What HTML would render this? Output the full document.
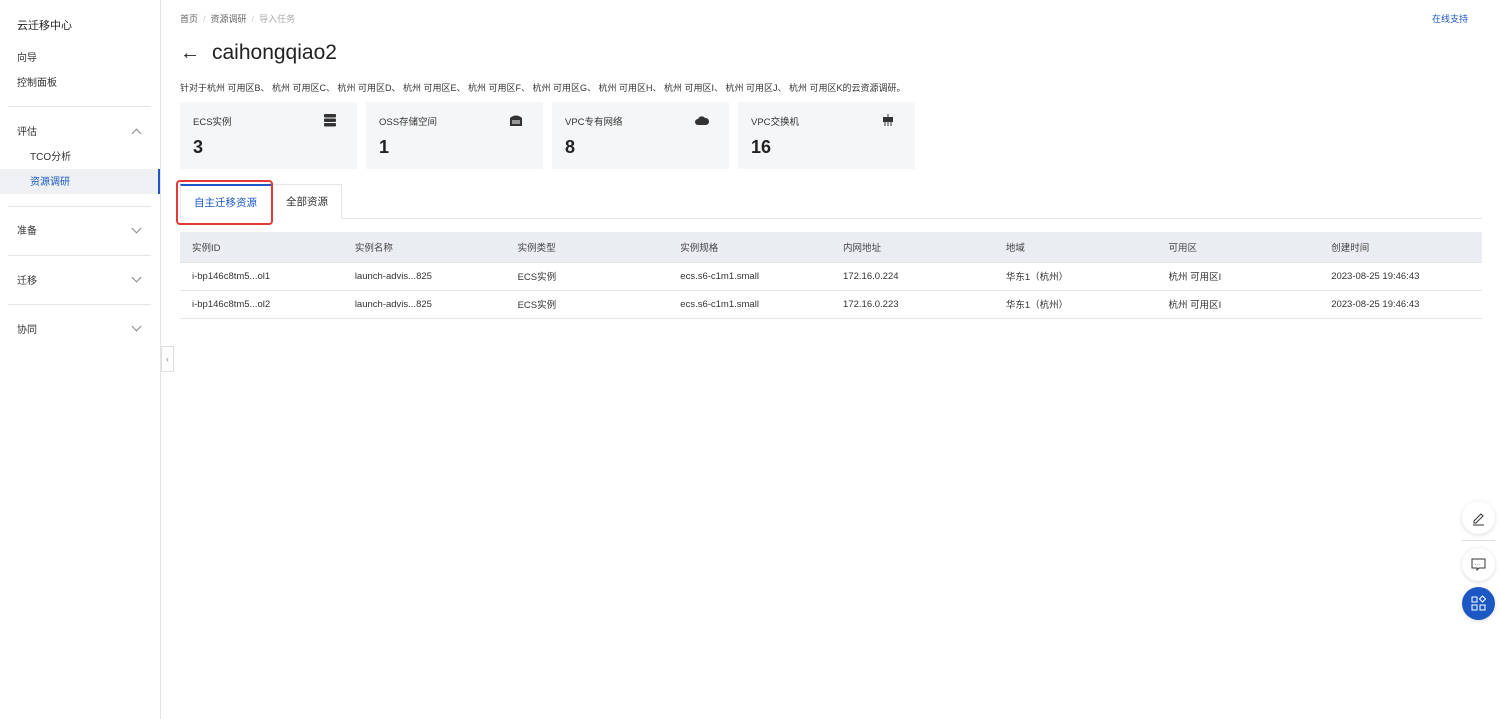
<!DOCTYPE html>
<html><head><meta charset="utf-8"><style>
*{margin:0;padding:0;box-sizing:border-box}
body{width:1500px;height:719px;background:#fff;font-family:"Liberation Sans","Noto Sans CJK SC",sans-serif;color:#333;position:relative;overflow:hidden;font-size:10px}
.side{position:absolute;left:0;top:0;width:161px;height:719px;border-right:1px solid #e3e3e3;background:#fff}
.side div{position:absolute;font-size:10px;color:#333}
.hr{position:absolute;left:8px;width:143px;height:1px;background:#e5e5e5}
.chev{position:absolute;left:133px;width:7px;height:7px;border-right:1px solid #888;border-bottom:1px solid #888}
.a{position:absolute}
.card{position:absolute;top:102px;width:177px;height:67px;background:#f5f6f7}
.card .t{position:absolute;left:13px;top:12px;font-size:9.5px}
.card .n{position:absolute;left:13px;top:35px;font-size:18px;color:#222;font-weight:bold}
.card svg{position:absolute;right:20px;top:12px}
table{position:absolute;left:180px;top:232px;width:1302px;border-collapse:collapse;font-size:9.5px}
td{height:28px;padding-left:12px;border-bottom:1px solid #e5e5e5;width:163px}
tr.h td{background:#eaedf1;height:30px;color:#444}
.fab{position:absolute;left:1462px;width:33px;height:33px;border-radius:50%;background:#fff;box-shadow:0 1px 4px rgba(0,0,0,.15)}
</style></head><body>
<div class="side">
<div style="left:17px;top:17px;font-size:11px;color:#222">云迁移中心</div>
<div style="left:17px;top:49px">向导</div>
<div style="left:17px;top:74px">控制面板</div>
<div class="hr" style="top:106px"></div>
<div style="left:17px;top:123px">评估</div>
<div class="chev" style="top:130px;transform:rotate(225deg)"></div>
<div style="left:30px;top:148px">TCO分析</div>
<div style="left:0;top:169px;width:160px;height:25px;background:#eef0f4;border-right:2px solid #1b58c4"></div>
<div style="left:30px;top:173px;color:#1b58c4">资源调研</div>
<div class="hr" style="top:206px"></div>
<div style="left:17px;top:222px">准备</div>
<div class="chev" style="top:225px;transform:rotate(45deg)"></div>
<div class="hr" style="top:255px"></div>
<div style="left:17px;top:272px">迁移</div>
<div class="chev" style="top:274px;transform:rotate(45deg)"></div>
<div class="hr" style="top:304px"></div>
<div style="left:17px;top:321px">协同</div>
<div class="chev" style="top:323px;transform:rotate(45deg)"></div>
</div>
<div class="a" style="left:161px;top:346px;width:13px;height:26px;border:1px solid #ddd;background:#fff;font-size:9px;color:#888;text-align:center;line-height:24px">‹</div>
<div class="a" style="left:180px;top:12px;font-size:9px;color:#666">首页 <span style="color:#ccc">&nbsp;/&nbsp;</span> 资源调研 <span style="color:#ccc">&nbsp;/&nbsp;</span> <span style="color:#aaa">导入任务</span></div>
<div class="a" style="left:1432px;top:12px;font-size:9px;color:#1b58c4">在线支持</div>
<div class="a" style="left:180px;top:42px;font-size:20px;color:#222">←</div>
<div class="a" style="left:212px;top:41px;font-size:21px;color:#222">caihongqiao2</div>
<div class="a" style="left:180px;top:81px;font-size:9px;color:#333">针对于杭州 可用区B、 杭州 可用区C、 杭州 可用区D、 杭州 可用区E、 杭州 可用区F、 杭州 可用区G、 杭州 可用区H、 杭州 可用区I、 杭州 可用区J、 杭州 可用区K的云资源调研。</div>
<div class="card" style="left:180px"><div class="t">ECS实例</div><div class="n">3</div><svg width="14" height="13"><rect x="1" y="0" width="12" height="3.5" rx="1" fill="#333"/><rect x="1" y="4.5" width="12" height="3.5" rx="1" fill="#333"/><rect x="1" y="9" width="12" height="3.5" rx="1" fill="#333"/></svg></div>
<div class="card" style="left:366px"><div class="t">OSS存储空间</div><div class="n">1</div><svg width="14" height="13"><path d="M1 4q6-5 12 0v8H1z" fill="#333"/><path d="M3 7h8M3 9h8" stroke="#fff"/></svg></div>
<div class="card" style="left:552px"><div class="t">VPC专有网络</div><div class="n">8</div><svg width="14" height="13"><path d="M3 11a3 3 0 010-6a4 4 0 017-1a3.5 3.5 0 011 7z" fill="#333"/></svg></div>
<div class="card" style="left:738px"><div class="t">VPC交换机</div><div class="n">16</div><svg width="14" height="13"><rect x="2" y="3" width="10" height="5" fill="#333"/><path d="M4 8v4M7 8v4M10 8v4M7 0v3" stroke="#333"/></svg></div>
<div class="a" style="left:180px;top:218px;width:1302px;height:1px;background:#e5e5e5"></div>
<div class="a" style="left:180px;top:184px;width:92px;height:35px;background:#fff;border-top:2px solid #1b58c4;border-left:1px solid #e5e5e5"></div>
<div class="a" style="left:272px;top:184px;width:70px;height:35px;background:#fff;border:1px solid #e5e5e5;border-bottom:none;font-size:10.5px;text-align:center;line-height:34px">全部资源</div>
<div class="a" style="left:176px;top:180px;width:97px;height:45px;border:2px solid #e53935;border-radius:4px;font-size:10.5px;color:#1b58c4;padding:13px 0 0 16px">自主迁移资源</div>
<table>
<tr class="h"><td>实例ID</td><td>实例名称</td><td>实例类型</td><td>实例规格</td><td>内网地址</td><td>地域</td><td>可用区</td><td>创建时间</td></tr>
<tr><td>i-bp146c8tm5...ol1</td><td>launch-advis...825</td><td>ECS实例</td><td>ecs.s6-c1m1.small</td><td>172.16.0.224</td><td>华东1（杭州）</td><td>杭州 可用区I</td><td>2023-08-25 19:46:43</td></tr>
<tr><td>i-bp146c8tm5...ol2</td><td>launch-advis...825</td><td>ECS实例</td><td>ecs.s6-c1m1.small</td><td>172.16.0.223</td><td>华东1（杭州）</td><td>杭州 可用区I</td><td>2023-08-25 19:46:43</td></tr>
</table>
<div class="fab" style="top:501px"><svg width="33" height="33"><path d="M12 20l7-7 2 2-7 7h-2z M11 24h11" stroke="#333" fill="none"/></svg></div>
<div class="a" style="left:1462px;top:540px;width:33px;height:1px;background:#ddd"></div>
<div class="fab" style="top:548px"><svg width="33" height="33"><path d="M10 11h13v9h-6l-2 2v-2h-5z" stroke="#333" fill="none"/><text x="12.5" y="18" font-size="6" fill="#333">···</text></svg></div>
<div class="fab" style="top:587px;background:#1b58c4"><svg width="33" height="33" fill="none" stroke="#fff"><rect x="10" y="10" width="5" height="5"/><rect x="10" y="18" width="5" height="5"/><rect x="18" y="18" width="5" height="5"/><path d="M20.5 9l3 3-3 3-3-3z"/></svg></div>
</body></html>
